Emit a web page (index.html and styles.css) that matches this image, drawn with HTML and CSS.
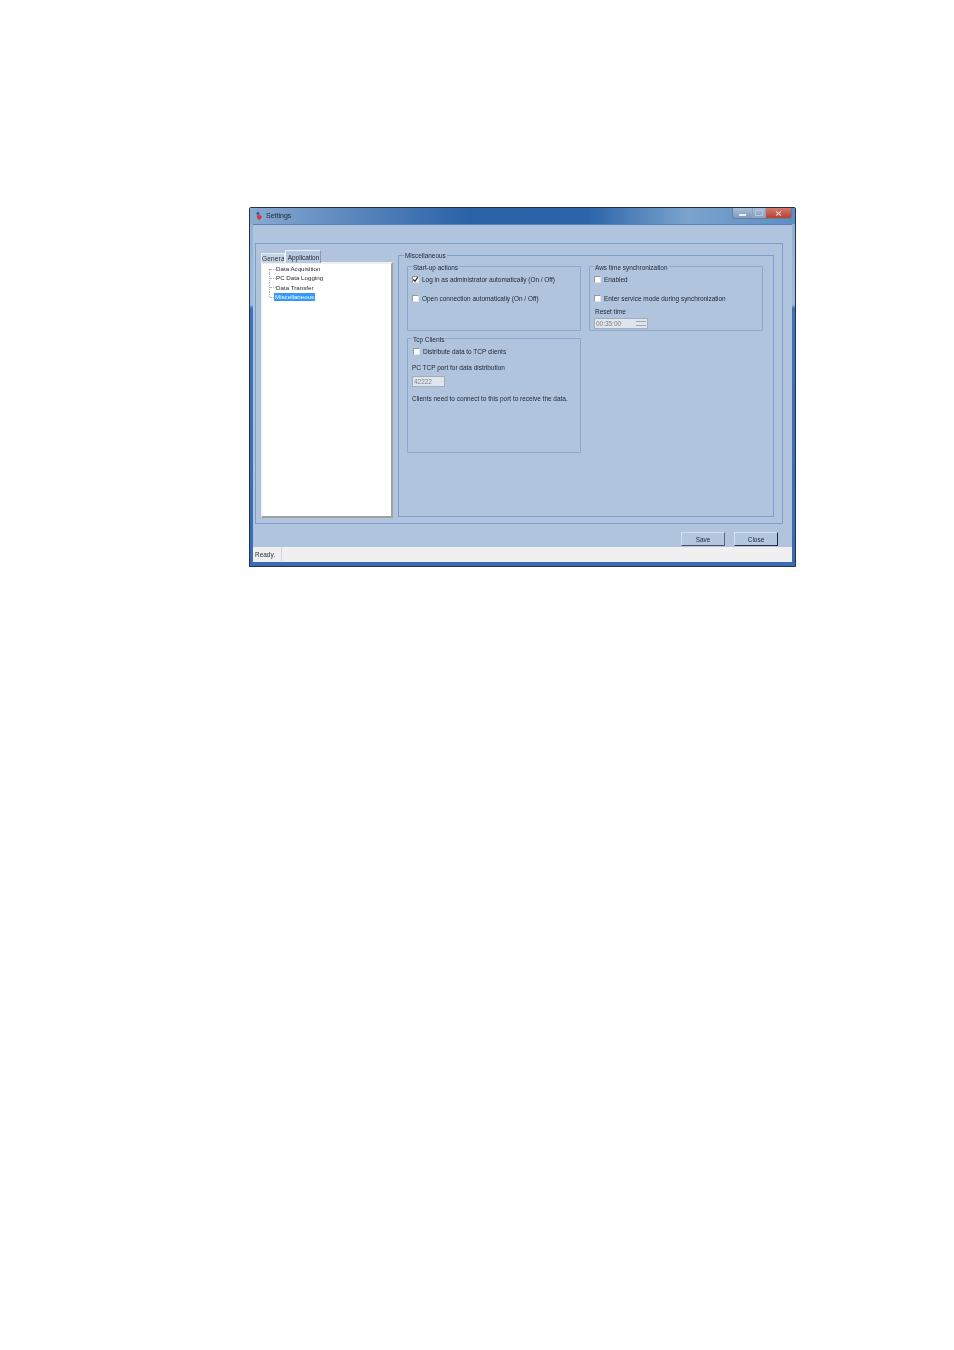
FILE: index.html
```html
<!DOCTYPE html>
<html lang="en">
<head>
<meta charset="utf-8">
<title>Settings</title>
<link rel="stylesheet" href="styles.css">
</head>
<body>
<div class="window">
  <div class="titlebar">
    <svg class="app-icon" viewBox="0 0 8 9" width="8" height="9"><path d="M1 2.5 3 .5 5 2.5 3 4.5Z" fill="#2f5fb0"/><path d="M1.5 5 4 3.8 7 5.2 5.5 8.5 3 8.5Z" fill="#d8362c"/></svg>
    <span class="title">Settings</span>
    <div class="controls">
      <div class="ctl ctl-min"><span class="min-glyph"></span></div>
      <div class="ctl ctl-max"><span class="max-glyph"></span></div>
      <div class="ctl ctl-close"><svg viewBox="0 0 8 6" width="7" height="5"><path d="M1 .5 7 5.5M7 .5 1 5.5" stroke="#e8dcdc" stroke-width="1.4"/></svg></div>
    </div>
  </div>
  <div class="client">
    <div class="tabpanel">
      <div class="left">
        <div class="tabs">
          <div class="tab">Genera</div>
          <div class="tab tab-active">Application</div>
        </div>
        <div class="tree">
          <div class="node"><span class="branch"></span><span>Data Acquisition</span></div>
          <div class="node"><span class="branch"></span><span>PC Data Logging</span></div>
          <div class="node"><span class="branch"></span><span>Data Transfer</span></div>
          <div class="node"><span class="branch"></span><span class="selected">Miscellaneous</span></div>
        </div>
      </div>
      <div class="misc">
        <div class="group-title misc-title">Miscellaneous</div>
        <div class="misc-grid">
          <div class="group startup">
            <div class="group-title">Start-up actions</div>
            <div class="check-row first"><span class="box checked"><svg viewBox="0 0 7 7" width="7" height="7"><path d="M1.3 3.5 3 5.3 5.8 1.2" fill="none" stroke="#222" stroke-width="1.2"/></svg></span><span>Log in as administrator automatically (On / Off)</span></div>
            <div class="check-row second"><span class="box"></span><span>Open connection automatically (On / Off)</span></div>
          </div>
          <div class="group aws">
            <div class="group-title">Aws time synchronization</div>
            <div class="check-row first"><span class="box"></span><span>Enabled</span></div>
            <div class="check-row second"><span class="box"></span><span>Enter service mode during synchronization</span></div>
            <div class="label reset">Reset time</div>
            <div class="spinner"><span>00:35:00</span><span class="spin-btns"><i></i><i></i></span></div>
          </div>
          <div class="group tcp">
            <div class="group-title">Tcp Clients</div>
            <div class="check-row first tcp-check"><span class="box"></span><span>Distribute data to TCP clients</span></div>
            <div class="label port">PC TCP port for data distribution</div>
            <div class="input">42222</div>
            <div class="label note">Clients need to connect to this port to receive the data.</div>
          </div>
        </div>
      </div>
    </div>
    <div class="buttons">
      <div class="btn">Save</div>
      <div class="btn btn-close">Close</div>
    </div>
  </div>
  <div class="statusbar"><div class="status">Ready.</div></div>
</div>
</body>
</html>
```
FILE: styles.css
```css
html, body { margin: 0; padding: 0; background: #fff; }
body { width: 954px; height: 1350px; padding: 207px 0 0 249px; box-sizing: border-box; overflow: hidden; font-family: "Liberation Sans", Arial, sans-serif; font-size: 6.45px; color: #1f2430; }
.window { width: 547px; height: 360px; box-sizing: border-box; display: flex; flex-direction: column; border: 1px solid #26323f; border-radius: 2px 2px 0 0; padding: 0 3px 4px 3px; background: linear-gradient(180deg, #8fb0d6 0, #9dbbdc 27%, #3f73b8 28%, #3a6db4 100%); filter: blur(.4px); }
.titlebar { height: 16px; margin: 0 -3px; padding-left: 5px; display: flex; align-items: center; background: linear-gradient(90deg, #8aaad0 0, #6a93c4 12%, #2a62a8 40%, #2b64aa 62%, #7ba3cd 80%, #5c8ec6 100%); position: relative; flex: none; }
.app-icon { flex: none; margin-top: -1px; }
.title { margin-left: 3px; font-size: 7px; margin-top: -2px; color: #1c2530; }
.controls { margin-left: auto; margin-right: 3px; align-self: flex-start; display: flex; height: 11px; border: 1px solid #6a7d95; border-top: 0; border-radius: 0 0 3px 3px; overflow: hidden; box-sizing: border-box; width: 60px; }
.ctl { display: flex; align-items: center; justify-content: center; }
.ctl-min { width: 19px; background: linear-gradient(180deg, #a9bed8, #7e9cc0); }
.ctl-max { width: 12px; background: linear-gradient(180deg, #a9bed8, #86a2c4); border-left: 1px solid #8ba3c0; border-right: 1px solid #8ba3c0; }
.ctl-close { flex: 1; background: linear-gradient(180deg, #d07c70, #b9402f); }
.min-glyph { width: 7px; height: 2px; margin-top: 4px; background: #eef2f6; }
.max-glyph { width: 6px; height: 4px; border: 1px solid #b4c6da; }
.client { flex: 1; min-height: 0; display: flex; flex-direction: column; background: #b0c4de; border-top: 1px solid #5e82b4; padding: 18px 9px 0 2px; }
.tabpanel { height: 281px; box-sizing: border-box; flex: none; display: flex; align-items: stretch; border: 1px solid #7d9dca; padding: 6px 8px 6px 5px; }
.left { width: 132px; flex: none; display: flex; flex-direction: column; margin-bottom: -1px; }
.tabs { display: flex; align-items: flex-end; height: 13px; position: relative; z-index: 1; margin-bottom: -1px; }
.tab { width: 24px; height: 10px; line-height: 9px; box-sizing: border-box; text-align: center; overflow: hidden; white-space: nowrap; background: #c8d5e6; border: 1px solid #e9eef5; border-bottom: 0; letter-spacing: .2px; }
.tab-active { width: 36px; height: 13px; line-height: 13px; background: #b8cae2; border: 1px solid #eef1f5; border-right-color: #8c97a6; border-bottom: 0; letter-spacing: 0; padding-left: 1px; }
.tree { flex: 1; background: #fff; border: 2px solid #f0f0f0; border-right-color: #a0a0a0; border-bottom-color: #a0a0a0; border-left-width: 1px; font-size: 6.2px; }
.node { height: 9.3px; line-height: 9.3px; display: flex; align-items: center; white-space: nowrap; }
.branch { width: 6px; height: 100%; margin-left: 7px; border-left: 1px dotted #b4b4b4; position: relative; flex: none; box-sizing: border-box; }
.branch::after { content: ""; position: absolute; left: 0; top: 50%; width: 6px; border-top: 1px dotted #b4b4b4; }
.node:first-child .branch { height: 50%; align-self: flex-end; }
.node:first-child .branch::after { top: 0; }
.node:last-child .branch { height: 50%; align-self: flex-start; }
.node:last-child .branch::after { top: 100%; }
.node span:last-child { padding: 0 1px; }
.node .selected { background: #3399ff; color: #fff; margin-left: -1px; height: 8px; line-height: 8px; }
.misc { flex: 1; min-width: 0; margin-left: 5px; margin-top: 5px; border: 1px solid #7d9dca; padding: 0 9px 0 8px; display: flex; flex-direction: column; }
.group-title { width: fit-content; height: 8px; line-height: 8px; margin: -3px 0 -1px 0; padding: 0 1px; background: #b0c4de; white-space: nowrap; }
.misc-title { margin: -4px 0 0 -3px; }
.misc-grid { display: grid; grid-template-columns: 174px 174px; column-gap: 8px; grid-template-rows: 65px 115px; row-gap: 7px; margin-top: 6px; }
.group { border: 1px solid #8aa7cf; border-radius: 1px; padding: 0 4px; box-sizing: border-box; }
.tcp { grid-column: 1; grid-row: 2; }
.check-row { display: flex; align-items: center; height: 8px; line-height: 8px; white-space: nowrap; }
.check-row.first { margin-top: 5px; }
.check-row.second { margin-top: 11px; }
.tcp-check { padding-left: 1px; }
.box { width: 7px; height: 7px; flex: none; box-sizing: border-box; margin: -1px 3px 0 0; background: #fff; border: 1px solid #8e9aa8; border-bottom-color: #dfe5ec; border-right-color: #dfe5ec; display: block; position: relative; }
.box svg { position: absolute; left: -1px; top: -1px; }
.label { height: 8px; line-height: 8px; white-space: nowrap; }
.reset { margin-top: 5px; padding-left: 1px; }
.spinner { width: 54px; height: 11px; margin-top: 2px; box-sizing: border-box; display: flex; align-items: center; justify-content: space-between; padding: 0 1px; background: #dfe5ec; border: 1px solid #a3adba; color: #7d8188; }
.spin-btns { display: flex; flex-direction: column; gap: 3px; width: 10px; }
.spin-btns i { display: block; height: 1px; background: #a2a8b0; }
.port { margin-top: 8px; }
.input { width: 33px; height: 11px; margin-top: 4px; box-sizing: border-box; line-height: 9px; padding-left: 1px; background: #dfe5ec; border: 1px solid #a3adba; color: #7d8188; }
.note { margin-top: 8px; }
.buttons { display: flex; justify-content: flex-end; gap: 9px; margin-top: 8px; padding-right: 5px; }
.btn { width: 44px; height: 14px; box-sizing: border-box; text-align: center; line-height: 13px; background: #b3c7e0; border: 1px solid #d5e0ee; border-right-color: #5e6670; border-bottom-color: #4a525c; }
.btn-close { border-right-color: #1e2630; border-bottom-color: #2a323c; }
.statusbar { flex: none; margin-top: auto; height: 15px; background: #f0f0f0; display: flex; }
.status { width: 29px; height: 14px; line-height: 15px; box-sizing: border-box; padding-left: 2px; border-right: 1px solid #d5d5d5; }
```
